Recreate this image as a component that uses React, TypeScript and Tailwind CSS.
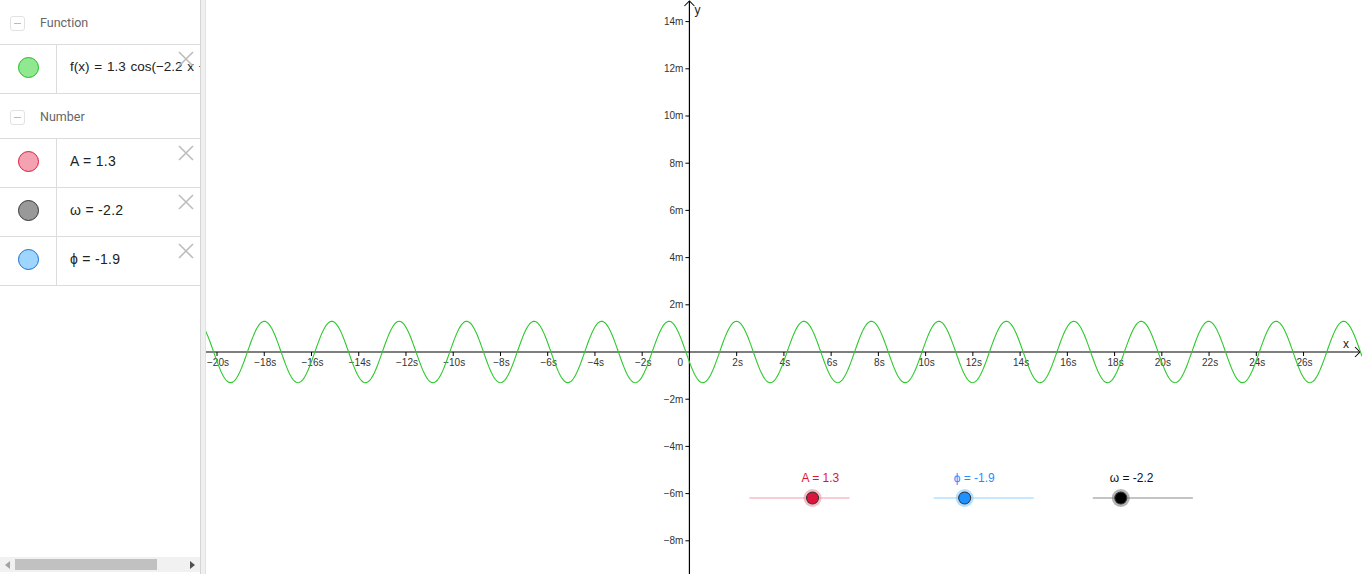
import React from 'react';

// graphics view scale (px per unit) and origin in page coordinates
const S = 23.6;
const OX = 690;
const OY = 352;

const A = 1.3;
const W = -2.2;
const PHI = -1.9;

const curvePath = (() => {
  let d = '';
  for (let px = 206; px <= 1362; px += 1) {
    const x = (px - OX) / S;
    const y = A * Math.cos(W * x + PHI);
    const py = OY - y * S;
    d += `${px === 206 ? 'M' : 'L'}${px},${py.toFixed(2)} `;
  }
  return d;
})();

const xTicks = Array.from({ length: 24 }, (_, i) => -20 + i * 2).filter((v) => v !== 0);
const yTicks = [14, 12, 10, 8, 6, 4, 2, -2, -4, -6, -8];

const CloseIcon = () => (
  <svg className="absolute right-[6px] top-[6px] w-[16px] h-[16px]" viewBox="0 0 16 16">
    <path d="M1 1L15 15M15 1L1 15" stroke="#bdbdbd" strokeWidth={1.6} />
  </svg>
);

const GroupHeader = ({ title }: { title: string }) => (
  <div className="h-[45px] pt-[3px] flex items-center border-b border-[#dcdcdc]">
    <div className="ml-[10px] w-[15px] h-[15px] rounded-[3px] border border-[#e2e2e2] flex items-center justify-center">
      <div className="w-[7px] h-px bg-[#bbbbbb]" />
    </div>
    <span className="ml-[15px] text-[12.5px] text-[#666]" style={{ fontFamily: 'Roboto, sans-serif' }}>
      {title}
    </span>
  </div>
);

const ItemRow = ({ fill, stroke, children }: { fill: string; stroke: string; children: React.ReactNode }) => (
  <div className="relative h-[49px] flex border-b border-[#dcdcdc]">
    <div className="w-[57px] pb-[4px] flex items-center justify-center border-r border-[#dcdcdc] shrink-0">
      <div className="w-[21px] h-[21px] rounded-full border" style={{ background: fill, borderColor: stroke }} />
    </div>
    <div
      className="flex-1 flex items-center pl-[13px] pb-[4px] text-[14px] tracking-[0.3px] text-[#222] whitespace-nowrap overflow-hidden"
      style={{ fontFamily: '"Liberation Sans", Arial, sans-serif' }}
    >
      {children}
    </div>
    <CloseIcon />
  </div>
);

const Slider = ({
  x1, x2, knob, line, color, halo, label, labelX,
}: {
  x1: number; x2: number; knob: number; line: string; color: string; halo: string; label: string; labelX: number;
}) => (
  <g>
    <text x={labelX} y={482} fontSize={12} fill={color === '#000' ? '#111' : color} fontFamily='"Liberation Sans", Arial, sans-serif'>
      {label}
    </text>
    <line x1={x1} y1={498} x2={x2} y2={498} stroke={line} strokeWidth={1.2} />
    <circle cx={knob} cy={498} r={9} fill={halo} opacity={0.55} />
    <circle cx={knob} cy={498} r={6} fill={color} stroke="#333" strokeWidth={1} />
  </g>
);

export default function App() {
  return (
    <div className="w-[1362px] h-[574px] flex bg-white overflow-hidden">
      {/* Algebra view */}
      <div className="w-[201px] h-full flex flex-col border-r border-[#d4d4d4] shrink-0">
        <GroupHeader title="Function" />
        <ItemRow fill="#90e890" stroke="#22bb22">
          <span className="text-[13.5px] tracking-normal [word-spacing:1px]">f(x) = 1.3 cos(−2.2 x − 1.9)</span>
        </ItemRow>
        <GroupHeader title="Number" />
        <ItemRow fill="#f4a2b2" stroke="#d81b3c">
          <span>A = 1.3</span>
        </ItemRow>
        <ItemRow fill="#999999" stroke="#333333">
          <span>ω = -2.2</span>
        </ItemRow>
        <ItemRow fill="#9fd6ff" stroke="#1a6fd0">
          <span>ϕ = -1.9</span>
        </ItemRow>
        <div className="flex-1" />
        {/* horizontal scrollbar */}
        <div className="h-[15px] mb-[2px] flex items-center bg-[#f1f1f1]">
          <div className="w-[15px] flex justify-center">
            <div className="w-0 h-0 border-y-[4px] border-y-transparent border-r-[5px] border-r-[#a3a3a3]" />
          </div>
          <div className="w-[142px] h-[11px] bg-[#c1c1c1]" />
          <div className="flex-1" />
          <div className="w-[15px] flex justify-center">
            <div className="w-0 h-0 border-y-[4px] border-y-transparent border-l-[5px] border-l-[#505050]" />
          </div>
        </div>
      </div>
      {/* splitter */}
      <div className="w-[5px] h-full bg-[#f0f0f0] border-r border-[#e2e2e2] shrink-0" />

      {/* Graphics view */}
      <svg className="flex-1 h-full" viewBox="207 0 1155 574" preserveAspectRatio="none">
        {/* axes */}
        <line x1={207} y1={OY} x2={1360} y2={OY} stroke="#000" strokeWidth={1.2} />
        <path d={`M1355,${OY - 5} L1360,${OY} L1355,${OY + 5}`} fill="none" stroke="#000" strokeWidth={1} />
        <line x1={OX} y1={1} x2={OX} y2={574} stroke="#000" strokeWidth={1.2} />
        <path d={`M${OX - 5},6 L${OX},1 L${OX + 5},6`} fill="none" stroke="#000" strokeWidth={1} />
        <text x={1343} y={348} fontSize={12} fill="#222" fontFamily='"Liberation Sans", Arial, sans-serif'>x</text>
        <text x={695} y={14} fontSize={12} fill="#222" fontFamily='"Liberation Sans", Arial, sans-serif'>y</text>

        {/* x ticks */}
        {xTicks.map((v) => {
          const px = OX + v * S;
          return (
            <g key={`x${v}`}>
              <line x1={px} y1={OY} x2={px} y2={OY + 4} stroke="#000" strokeWidth={1} />
              <text
                x={px + 1}
                y={OY + 14}
                fontSize={10}
                textAnchor="middle"
                fill="#333"
                fontFamily='"Liberation Sans", Arial, sans-serif'
              >
                {v < 0 ? `−${-v}s` : `${v}s`}
              </text>
            </g>
          );
        })}
        <text x={681} y={OY + 14} fontSize={10} textAnchor="middle" fill="#333" fontFamily='"Liberation Sans", Arial, sans-serif'>0</text>

        {/* y ticks */}
        {yTicks.map((v) => {
          const py = OY - v * S;
          return (
            <g key={`y${v}`}>
              <line x1={OX - 4} y1={py} x2={OX} y2={py} stroke="#000" strokeWidth={1} />
              <text
                x={OX - 6}
                y={py + 3.5}
                fontSize={10}
                textAnchor="end"
                fill="#333"
                fontFamily='"Liberation Sans", Arial, sans-serif'
              >
                {v < 0 ? `−${-v}m` : `${v}m`}
              </text>
            </g>
          );
        })}

        {/* f(x) */}
        <path d={curvePath} fill="none" stroke="#2ec82e" strokeWidth={1.1} />

        {/* sliders */}
        <Slider x1={750} x2={850} knob={813} line="#f49aae" color="#dc143c" halo="#e88a9c" label="A = 1.3" labelX={802} />
        <Slider x1={934} x2={1034} knob={965} line="#92d2ff" color="#1e90ff" halo="#79c4ff" label="ϕ = -1.9" labelX={954} />
        <Slider x1={1093} x2={1193} knob={1121} line="#8a8a8a" color="#000" halo="#777" label="ω = -2.2" labelX={1110} />
      </svg>
    </div>
  );
}
